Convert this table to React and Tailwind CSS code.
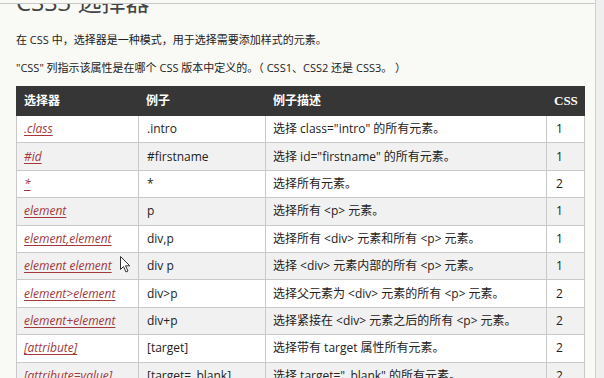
import React from "react";

const rows = [
  { sel: ".class", ex: ".intro", desc: '选择 class="intro" 的所有元素。', css: "1" },
  { sel: "#id", ex: "#firstname", desc: '选择 id="firstname" 的所有元素。', css: "1" },
  { sel: "*", ex: "*", desc: "选择所有元素。", css: "2" },
  { sel: "element", ex: "p", desc: "选择所有 <p> 元素。", css: "1" },
  { sel: "element,element", ex: "div,p", desc: "选择所有 <div> 元素和所有 <p> 元素。", css: "1" },
  { sel: "element element", ex: "div p", desc: "选择 <div> 元素内部的所有 <p> 元素。", css: "1" },
  { sel: "element>element", ex: "div>p", desc: "选择父元素为 <div> 元素的所有 <p> 元素。", css: "2" },
  { sel: "element+element", ex: "div+p", desc: "选择紧接在 <div> 元素之后的所有 <p> 元素。", css: "2" },
  { sel: "[attribute]", ex: "[target]", desc: "选择带有 target 属性所有元素。", css: "2" },
  { sel: "[attribute=value]", ex: "[target=_blank]", desc: '选择 target="_blank" 的所有元素。', css: "2" },
];

export default function App() {
  return (
    <div className="flex h-[378px] w-[604px] overflow-hidden bg-[#f9f9f5] text-[#222]">
      <div className="relative flex w-[596px] flex-col border-r border-[#d0d0d0] font-['Open_Sans','Noto_Sans_CJK_SC',sans-serif]">
        <div className="h-[4px] shrink-0 border-b border-[#c8c8c8] bg-[#f9f9f5]"></div>
        <div className="flex-1 overflow-hidden px-[16px]">
          <h2 className="mt-[-17px] text-[24px] leading-[30px] font-normal text-[#444]">
            CSS3 选择器
          </h2>
          <p className="mt-[15px] text-[11px] leading-[16px]">
            在 CSS 中，选择器是一种模式，用于选择需要添加样式的元素。
          </p>
          <p className="mt-[12px] text-[11px] leading-[16px]">
            "CSS" 列指示该属性是在哪个 CSS 版本中定义的。（ CSS1、CSS2 还是 CSS3。 ）
          </p>
          <table className="mt-[10px] w-[569px] border-collapse text-[12px]">
            <thead>
              <tr className="h-[29px] bg-[#363636] text-left text-white">
                <th className="w-[122px] border border-[#363636] pl-[7px] font-bold">选择器</th>
                <th className="w-[127px] border border-[#363636] pl-[7px] font-bold">例子</th>
                <th className="w-[281px] border border-[#363636] pl-[7px] font-bold">例子描述</th>
                <th className="border border-[#363636] pl-[7px] font-['Liberation_Serif',serif] text-[13px] font-bold">CSS</th>
              </tr>
            </thead>
            <tbody>
              {rows.map((r, i) => (
                <tr key={i} className={i % 2 === 0 ? "h-[27.4px] bg-white" : "h-[27.4px] bg-[#f1f1f1]"}>
                  <td className="border border-[#c9c9c9] pl-[7px]">
                    <a className="italic text-[#a3393a] underline decoration-1 underline-offset-2">{r.sel}</a>
                  </td>
                  <td className="border border-[#c9c9c9] pl-[8px]">{r.ex}</td>
                  <td className="border border-[#c9c9c9] pl-[7px]">{r.desc}</td>
                  <td className="border border-[#c9c9c9] pl-[9px]">{r.css}</td>
                </tr>
              ))}
            </tbody>
          </table>
        </div>
        <svg
          className="absolute left-[120px] top-[256px]"
          width="11"
          height="17"
          viewBox="0 0 11 17"
        >
          <path d="M0.5 0.5 L0.5 13.5 L3.5 10.5 L6 16 L8 15 L5.5 9.8 L9.8 9.8 Z" fill="#fff" stroke="#333" strokeWidth="1" />
        </svg>
      </div>
      <div className="w-[8px] bg-[#efefef]"></div>
    </div>
  );
}
